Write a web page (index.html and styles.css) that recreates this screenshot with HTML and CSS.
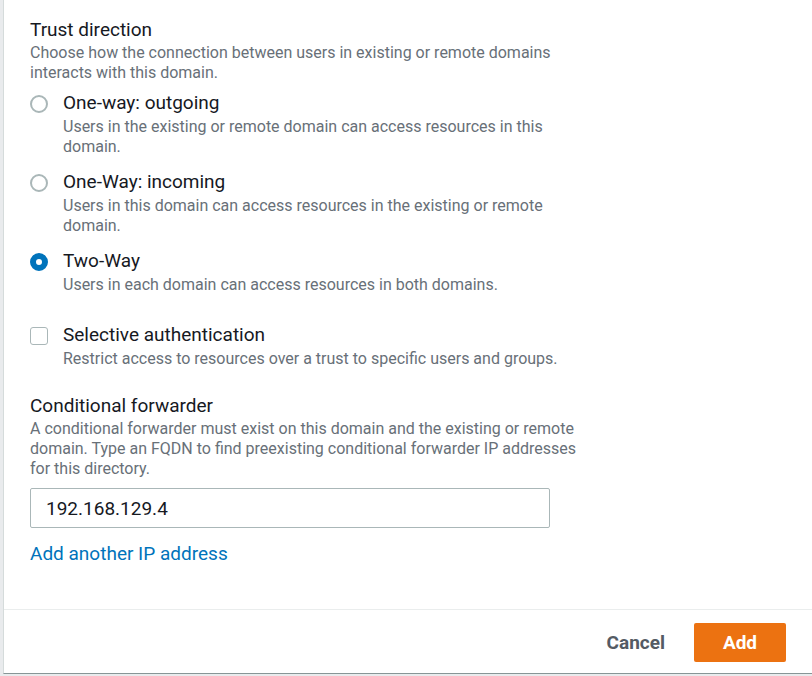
FILE: index.html
```html
<!DOCTYPE html>
<html lang="en">
<head>
    <meta charset="UTF-8">
    <meta name="viewport" content="width=device-width, initial-scale=1.0">
    <title>Add trust relationship</title>
    <link rel="stylesheet" href="styles.css">
</head>
<body>
    <div class="modal">
        <div class="modalBody">
            <div class="section">
                <div class="sectionTitle">Trust direction</div>
                <div class="sectionDesc">Choose how the connection between users in existing or remote domains<br>interacts with this domain.</div>

                <div class="option">
                    <span class="radio"></span>
                    <div class="optionText">
                        <div class="optionLabel">One-way: outgoing</div>
                        <div class="optionDesc">Users in the existing or remote domain can access resources in this<br>domain.</div>
                    </div>
                </div>
                <div class="option">
                    <span class="radio"></span>
                    <div class="optionText">
                        <div class="optionLabel">One-Way: incoming</div>
                        <div class="optionDesc">Users in this domain can access resources in the existing or remote<br>domain.</div>
                    </div>
                </div>
                <div class="option">
                    <span class="radio checked"></span>
                    <div class="optionText">
                        <div class="optionLabel">Two-Way</div>
                        <div class="optionDesc">Users in each domain can access resources in both domains.</div>
                    </div>
                </div>
            </div>

            <div class="option checkOption">
                <span class="checkbox"></span>
                <div class="optionText">
                    <div class="optionLabel">Selective authentication</div>
                    <div class="optionDesc">Restrict access to resources over a trust to specific users and groups.</div>
                </div>
            </div>

            <div class="section forwarder">
                <div class="sectionTitle">Conditional forwarder</div>
                <div class="sectionDesc">A conditional forwarder must exist on this domain and the existing or remote<br>domain. Type an FQDN to find preexisting conditional forwarder IP addresses<br>for this directory.</div>
                <input class="textInput" type="text" value="192.168.129.4">
                <a class="addLink" href="#">Add another IP address</a>
            </div>
        </div>

        <div class="modalFooter">
            <button class="cancelButton">Cancel</button>
            <button class="addButton">Add</button>
        </div>
    </div>
</body>
</html>
```

FILE: styles.css
```css
html, body {
    margin: 0;
    height: 100%;
}

body {
    font-family: Roboto, "Liberation Sans", sans-serif;
    background-color: #e9ebed;
    color: #16191f;
    overflow: hidden;
}

.modal {
    margin-left: 3px;
    width: calc(100vw - 3px);
    height: 674px;
    background-color: #fff;
    border-left: 1px solid #d5dbdb;
    border-bottom: 1px solid #879596;
    box-sizing: border-box;
    display: flex;
    flex-direction: column;
}

.modalBody {
    flex: 1;
    padding: 17px 0 0 26px;
}

.sectionTitle {
    font-size: 19px;
    line-height: 26px;
}

.sectionDesc,
.optionDesc {
    font-size: 16px;
    line-height: 20px;
    color: #687078;
}

.option {
    display: flex;
    align-items: flex-start;
    margin-top: 7px;
    margin-bottom: 12px;
}

.option + .option {
    margin-top: 0;
}

.optionText {
    margin-left: 15px;
}

.optionLabel {
    font-size: 19px;
    line-height: 26px;
    margin-bottom: 1px;
}

.radio {
    width: 18px;
    height: 18px;
    box-sizing: border-box;
    border: 2px solid #aab7b8;
    border-radius: 50%;
    margin-top: 5px;
    flex-shrink: 0;
}

.radio.checked {
    border: 6px solid #0073bb;
    background-color: #fff;
}

.checkOption {
    margin-top: 27px;
}

.checkbox {
    width: 18px;
    height: 18px;
    box-sizing: border-box;
    border: 1.5px solid #aab7b8;
    border-radius: 3px;
    margin-top: 5px;
    flex-shrink: 0;
}

.forwarder {
    margin-top: 24px;
}

.textInput {
    display: block;
    margin-top: 9px;
    width: 520px;
    height: 40px;
    box-sizing: border-box;
    border: 1px solid #aab7b8;
    border-radius: 2px;
    padding: 0 15px;
    font-family: inherit;
    font-size: 19px;
    color: #16191f;
    outline: none;
}

.addLink {
    display: inline-block;
    margin-top: 14px;
    font-size: 19px;
    line-height: 24px;
    color: #0073bb;
    text-decoration: none;
}

.modalFooter {
    border-top: 1px solid #eaeded;
    height: 64px;
    box-sizing: border-box;
    display: flex;
    align-items: center;
    justify-content: flex-end;
    padding: 1px 26px 0 0;
}

.modalFooter button {
    font-family: inherit;
    font-size: 19px;
    font-weight: bold;
    border: none;
    cursor: pointer;
}

.cancelButton {
    background: none;
    color: #545b64;
    padding: 8px 20px;
    margin-right: 9px;
}

.addButton {
    background-color: #ec7211;
    color: #fff;
    width: 92px;
    height: 39px;
    border-radius: 2px;
}
```
